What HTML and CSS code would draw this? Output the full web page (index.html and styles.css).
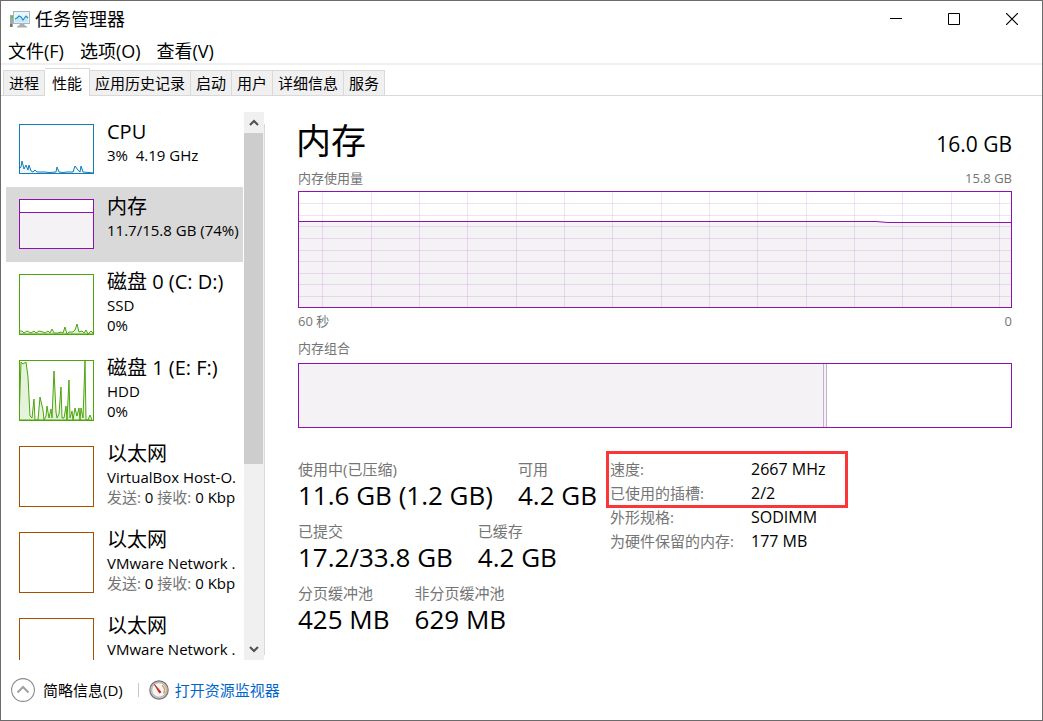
FILE: index.html
```html
<!DOCTYPE html>
<html lang="zh-CN">
<head>
<meta charset="utf-8">
<meta name="viewport" content="width=device-width, initial-scale=1">
<title>任务管理器</title>
<link rel="stylesheet" href="styles.css">
</head>
<body>
<div class="window">
  <header class="titlebar">
    <svg class="app-icon" viewBox="0 0 20 18" width="20" height="18" aria-hidden="true">
      <rect x="0" y="5" width="3" height="12" fill="#a3a8aa"/>
      <rect x="1" y="6" width="2" height="2" fill="#3ad13a"/>
      <path d="M0 14h2v3H0z" fill="#6e7476"/>
      <rect x="3.500" y="1.500" width="16" height="12" fill="#e6f6fe" stroke="#b0b4b6"/>
      <path d="M5 9l2-1 2-2 2 1 2 3 3-4 2 2v4.500H5z" fill="#c5e8f8"/>
      <path d="M5 9l2-1 2-2 2 1 2 3 3-4 2 2" fill="none" stroke="#1c8cc4" stroke-width="1.100"/>
      <path d="M10 14h4l1 1.500 2 1v1H7v-1l2-1z" fill="#a8adaf"/>
    </svg>
    <h1 class="title">任务管理器</h1>
    <div class="caption-buttons">
      <button class="caption" type="button" aria-label="最小化">
        <svg viewBox="0 0 12 12" width="12" height="12"><path d="M0 5.500h12" stroke="#000"/></svg>
      </button>
      <button class="caption" type="button" aria-label="最大化">
        <svg viewBox="0 0 12 12" width="12" height="12"><path d="M.5.5h11v11H.5z" fill="none" stroke="#000"/></svg>
      </button>
      <button class="caption" type="button" aria-label="关闭">
        <svg viewBox="0 0 12 12" width="12" height="12"><path d="M0 0l12 12M12 0L0 12" stroke="#000" stroke-width="1.200"/></svg>
      </button>
    </div>
  </header>

  <nav class="menubar">
    <button class="menu" type="button">文件(F)</button>
    <button class="menu" type="button">选项(O)</button>
    <button class="menu" type="button">查看(V)</button>
  </nav>

  <div class="tabs" role="tablist">
    <button class="tab" type="button" role="tab">进程</button>
    <button class="tab tab-active" type="button" role="tab" aria-selected="true">性能</button>
    <button class="tab" type="button" role="tab">应用历史记录</button>
    <button class="tab" type="button" role="tab">启动</button>
    <button class="tab" type="button" role="tab">用户</button>
    <button class="tab" type="button" role="tab">详细信息</button>
    <button class="tab" type="button" role="tab">服务</button>
  </div>

  <div class="content">
    <aside class="sidebar">
      <div class="devices">
        <button class="device" type="button">
          <svg class="thumb thumb-cpu" viewBox="0 0 75 50" aria-hidden="true">
            <path class="area" d="M0 50V45L2 43 3 37 5 45 7 41 9 46 10 41 12 47 14 48 16 46 18 48 26 48 30 48.500 37 48 38 43 40 48 44 48.500 48 48 54 48 56 42 59 46 61 48 62 42 64 48 75 49V50z"/>
            <rect class="edge" x=".5" y=".5" width="74" height="49"/>
          </svg>
          <span class="info"><span class="name">CPU</span><span class="line">3%&nbsp; 4.19 GHz</span></span>
        </button>
        <button class="device device-active" type="button">
          <svg class="thumb thumb-memory" viewBox="0 0 75 50" aria-hidden="true">
            <path class="area" d="M.5 13.500h74v36H.5z"/>
            <rect class="edge" x=".5" y=".5" width="74" height="49"/>
          </svg>
          <span class="info"><span class="name">内存</span><span class="line">11.7/15.8 GB (74%)</span></span>
        </button>
        <button class="device" type="button">
          <svg class="thumb thumb-tall thumb-disk" viewBox="0 0 75 61" aria-hidden="true">
            <path class="area" d="M0 60V57L3 57 5 59 8 57 12 59 15 57 17 59 20 57 24 58 26 59 29 57 31 59 33 55 35 59 39 59 42 58 44 59 46 53 48 60 50 58 54 58 56 56 58 50 60 58 63 57 65 59 67 56 69 60 72 57 75 60z"/>
            <rect class="edge" x=".5" y=".5" width="74" height="60"/>
          </svg>
          <span class="info"><span class="name">磁盘 0 (C: D:)</span><span class="line">SSD</span><span class="line">0%</span></span>
        </button>
        <button class="device" type="button">
          <svg class="thumb thumb-tall thumb-disk" viewBox="0 0 75 61" aria-hidden="true">
            <path class="area" d="M0 60L2 2 4 4 7 2 9 17 11 56 13 58 15 39 16 60 19 60 21 37 24 50 25 60 27 56 28 46 30 58 32 49 33 58 35 11 37 52 38 58 40 54 42 27 43 58 45 58 47 46 48 60 50 20 51 58 53 51 54 60 56 48 58 56 60 48 61 60 62 48 64 58 66 1 67 60 69 60 71 55 73 60z"/>
            <rect class="edge" x=".5" y=".5" width="74" height="60"/>
          </svg>
          <span class="info"><span class="name">磁盘 1 (E: F:)</span><span class="line">HDD</span><span class="line">0%</span></span>
        </button>
        <button class="device" type="button">
          <svg class="thumb thumb-tall thumb-net" viewBox="0 0 75 61" aria-hidden="true"><rect class="edge" x=".5" y=".5" width="74" height="60"/></svg>
          <span class="info"><span class="name">以太网</span><span class="line">VirtualBox Host-O.</span><span class="line"><span class="muted">发送:</span> 0 <span class="muted">接收:</span> 0 Kbp</span></span>
        </button>
        <button class="device" type="button">
          <svg class="thumb thumb-tall thumb-net" viewBox="0 0 75 61" aria-hidden="true"><rect class="edge" x=".5" y=".5" width="74" height="60"/></svg>
          <span class="info"><span class="name">以太网</span><span class="line">VMware Network .</span><span class="line"><span class="muted">发送:</span> 0 <span class="muted">接收:</span> 0 Kbp</span></span>
        </button>
        <button class="device" type="button">
          <svg class="thumb thumb-tall thumb-net" viewBox="0 0 75 61" aria-hidden="true"><rect class="edge" x=".5" y=".5" width="74" height="60"/></svg>
          <span class="info"><span class="name">以太网</span><span class="line">VMware Network .</span></span>
        </button>
      </div>
      <div class="scrollbar">
        <button class="scroll-button" type="button" aria-label="向上滚动">
          <svg viewBox="0 0 10 7" width="10" height="7"><path d="M1 6l4-4 4 4" fill="none" stroke="#505050" stroke-width="2"/></svg>
        </button>
        <div class="scroll-track"><div class="scroll-thumb"></div></div>
        <button class="scroll-button" type="button" aria-label="向下滚动">
          <svg viewBox="0 0 10 7" width="10" height="7"><path d="M1 1l4 4 4-4" fill="none" stroke="#505050" stroke-width="2"/></svg>
        </button>
      </div>
      <div class="divider"></div>
    </aside>

    <main class="panel">
      <div class="panel-head"><h2 class="heading">内存</h2><span class="capacity">16.0 GB</span></div>
      <div class="caption-row caption-top"><span>内存使用量</span><span>15.8 GB</span></div>
      <svg class="chart" viewBox="0 0 714 117" preserveAspectRatio="none" role="img" aria-label="内存使用量">
        <path fill="#f4f2f5" d="M0 30h580l8 1h126v86H0z"/>
        <path class="grid" d="M0 12.500h714M0 24.500h714M0 35.500h714M0 47.500h714M0 59.500h714M0 70.500h714M0 82.500h714M0 93.500h714M0 105.500h714M24.500 0v117M73.500 0v117M121.500 0v117M169.500 0v117M218.500 0v117M266.500 0v117M314.500 0v117M363.500 0v117M411.500 0v117M459.500 0v117M508.500 0v117M556.500 0v117M604.500 0v117M653.500 0v117M701.500 0v117"/>
        <path class="usage" d="M0 30.500h578l12 1h124"/>
        <rect class="frame" x=".5" y=".5" width="713" height="116"/>
      </svg>
      <div class="caption-row caption-bottom"><span>60 秒</span><span>0</span></div>
      <div class="caption-row caption-mix"><span>内存组合</span></div>
      <svg class="composition" viewBox="0 0 714 65" preserveAspectRatio="none" role="img" aria-label="内存组合">
        <path fill="#f4f2f5" d="M0 0h529v65H0z"/>
        <path class="split" d="M525.500 0v65M528.500 0v65"/>
        <rect class="frame" x=".5" y=".5" width="713" height="64"/>
      </svg>

      <div class="numbers">
        <div class="stats">
          <dl class="stat-row">
            <div><dt>使用中(已压缩)</dt><dd>11.6 GB (1.2 GB)</dd></div>
            <div><dt>可用</dt><dd>4.2 GB</dd></div>
          </dl>
          <dl class="stat-row">
            <div><dt>已提交</dt><dd>17.2/33.8 GB</dd></div>
            <div><dt>已缓存</dt><dd>4.2 GB</dd></div>
          </dl>
          <dl class="stat-row">
            <div><dt>分页缓冲池</dt><dd>425 MB</dd></div>
            <div><dt>非分页缓冲池</dt><dd>629 MB</dd></div>
          </dl>
        </div>
        <div class="details">
          <dl class="detail-grid">
            <dt>速度:</dt><dd>2667 MHz</dd>
            <dt>已使用的插槽:</dt><dd>2/2</dd>
            <dt>外形规格:</dt><dd>SODIMM</dd>
            <dt>为硬件保留的内存:</dt><dd>177 MB</dd>
          </dl>
          <div class="highlight"></div>
        </div>
      </div>
    </main>
  </div>

  <footer class="footer">
    <button class="fewer" type="button">
      <svg viewBox="0 0 24 24" width="24" height="24" aria-hidden="true"><circle cx="12" cy="12" r="11.400" fill="#fff" stroke="#8a8a8a" stroke-width="1.100"/><path d="M6.500 14.500L12 9l5.500 5.500" fill="none" stroke="#a0a0a0" stroke-width="2"/></svg>
      简略信息(D)
    </button>
    <span class="separator"></span>
    <a class="monitor" href="#">
      <svg viewBox="0 0 20 20" width="20" height="20" aria-hidden="true">
        <circle cx="10" cy="10" r="9.200" fill="#c9c9c7" stroke="#777" stroke-width="1.200"/>
        <circle cx="10" cy="10" r="7.200" fill="#f5f5f3" stroke="#999" stroke-width=".6"/>
        <path d="M13 5.500a5.500 5.500 0 0 1 1.500 8" fill="none" stroke="#ee9a55" stroke-width="1.500"/>
        <path d="M5.500 4.500l6.500 7.500-1.500 1z" fill="#d8201f" stroke="#c01515" stroke-width=".8"/>
      </svg>
      打开资源监视器
    </a>
  </footer>
</div>
</body>
</html>
```
FILE: styles.css
```css
* {
  box-sizing: border-box;
}

body,
h1,
h2,
dl,
dd {
  margin: 0;
}

body {
  font-family: "Open Sans", "Noto Sans CJK SC", sans-serif;
  font-size: 15px;
  color: #000;
  background: #fff;
}

button {
  margin: 0;
  padding: 0;
  border: 0;
  background: none;
  color: inherit;
  font: inherit;
  text-align: left;
}

svg {
  display: block;
  flex: none;
}

.window {
  display: flex;
  flex-direction: column;
  min-height: 100vh;
  border: 1px solid #6b6b6b;
  background: #fff;
}

.titlebar {
  display: flex;
  align-items: center;
  height: 36px;
  padding-left: 9px;
}

.title {
  flex: 1;
  margin-left: 5px;
  font-size: 18px;
  font-weight: 400;
  line-height: 24px;
}

.caption-buttons {
  display: flex;
  padding-right: 1px;
}

.caption {
  display: grid;
  place-items: center;
  width: 58px;
  height: 36px;
}

.menubar {
  display: flex;
  gap: 16px;
  padding: 2px 7px 0;
  border-bottom: 2px solid #f0f0f0;
}

.menu {
  font-size: 18px;
  line-height: 24px;
}

.tabs {
  display: flex;
  align-items: flex-end;
  height: 31px;
  padding-left: 2px;
  border-bottom: 1px solid #d9d9d9;
}

.tab {
  height: 25px;
  padding: 0 5px;
  border: solid #d9d9d9;
  border-width: 1px 1px 0 0;
  background: #f0f0f0;
  line-height: 24px;
}

.tab:first-child {
  border-left-width: 1px;
}

.tab-active {
  height: 28px;
  margin-bottom: -1px;
  padding: 0 7px;
  background: #fff;
}

.content {
  display: flex;
  flex: 1;
}

.sidebar {
  display: flex;
  flex: none;
  width: 264px;
  height: 548px;
  margin-top: 16px;
  padding-left: 5px;
}

.devices {
  flex: none;
  width: 237px;
  overflow: hidden;
}

.device {
  display: flex;
  gap: 13px;
  width: 100%;
  padding: 0 0 0 13px;
  overflow: hidden;
}

.device-active {
  background: #d9d9d9;
}

.thumb {
  width: 75px;
  height: 50px;
  margin: 12px 0 13px;
  background: #fff;
}

.thumb-tall {
  height: 61px;
}

.thumb .edge {
  fill: none;
  stroke: currentColor;
}

.thumb .area {
  fill: #f1f6f9;
  stroke: currentColor;
}

.thumb-cpu {
  color: #117dbb;
}

.thumb-memory {
  color: #8b12ae;
}

.thumb-memory .area {
  fill: #f4f2f5;
}

.thumb-disk {
  color: #4da60c;
}

.thumb-disk .area {
  fill: #e5f2dc;
}

.thumb-net {
  color: #a74f01;
}

.info {
  padding-top: 6px;
  white-space: nowrap;
}

.name,
.line {
  display: block;
}

.name {
  font-size: 20px;
  line-height: 27px;
}

.line {
  line-height: 20px;
}

.muted {
  color: #757575;
}

.scrollbar {
  display: flex;
  flex-direction: column;
  flex: none;
  width: 20px;
  margin-left: 1px;
  background: #f0f0f0;
}

.scroll-button {
  display: grid;
  place-items: center;
  height: 21px;
}

.scroll-track {
  flex: 1;
}

.scroll-thumb {
  width: 19px;
  height: 331px;
  background: #cdcdcd;
}

.divider {
  flex: none;
  width: 1px;
  margin: 12px 0 5px;
  background: #d9d9d9;
}

.panel {
  flex: 1;
  min-width: 0;
  padding: 22px 30px 0 33px;
}

.panel-head {
  display: flex;
  justify-content: space-between;
  align-items: center;
  height: 46px;
}

.heading {
  margin-left: -2px;
  font-size: 35px;
  font-weight: 400;
  line-height: 46px;
}

.capacity {
  padding-top: 6px;
  font-size: 21px;
  line-height: 28px;
}

.caption-row {
  display: flex;
  justify-content: space-between;
  color: #757575;
  font-size: 13px;
  line-height: 20px;
}

.caption-top {
  margin: 4px 0 3px;
}

.caption-bottom {
  margin: 3px 0 7px;
}

.caption-mix {
  margin-bottom: 5px;
}

.chart,
.composition {
  width: 100%;
  height: 117px;
}

.composition {
  height: 65px;
}

.frame,
.usage {
  fill: none;
  stroke: #8b12ae;
}

.grid {
  stroke: #8b12ae;
  stroke-opacity: .12;
}

.split {
  stroke: #c9aed3;
}

.numbers {
  display: flex;
  padding-top: 29px;
}

.stats {
  display: flex;
  flex: none;
  flex-direction: column;
  gap: 10px;
  width: 312px;
  padding-top: 2px;
}

.stat-row {
  display: flex;
  gap: 25px;
  white-space: nowrap;
}

.stats dt,
.details dt {
  color: #757575;
  line-height: 20px;
}

.stats dd {
  font-size: 26px;
  line-height: 32px;
}

.details {
  position: relative;
}

.detail-grid {
  display: grid;
  grid-template-columns: 141px auto;
}

.details dt,
.details dd {
  line-height: 24px;
}

.details dd {
  font-size: 16px;
}

.highlight {
  position: absolute;
  top: -6px;
  left: -4px;
  width: 242px;
  height: 57px;
  border: 3px solid #fb3638;
}

.footer {
  display: flex;
  align-items: center;
  height: 60px;
  padding: 0 10px 1px;
}

.fewer,
.monitor {
  display: flex;
  align-items: center;
}

.fewer {
  gap: 8px;
}

.separator {
  width: 1px;
  height: 14px;
  margin: 0 10px 0 15px;
  background: #c8c8c8;
}

.monitor {
  gap: 6px;
  color: #0066cc;
  text-decoration: none;
}
```
